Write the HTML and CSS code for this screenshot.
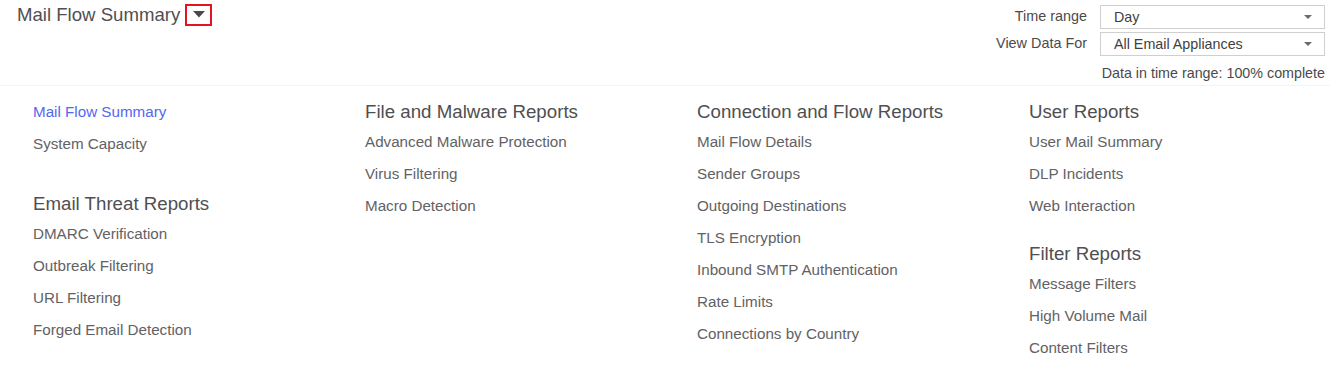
FILE: index.html
```html
<!DOCTYPE html>
<html lang="en">
<head>
<meta charset="utf-8">
<title>Mail Flow Summary</title>
<link rel="stylesheet" href="styles.css">
</head>
<body>
<header class="topbar">
  <div class="title-row">
    <h1 class="page-title">Mail Flow Summary</h1>
    <span class="title-toggle">
      <svg width="12" height="7" viewBox="0 0 12 7"><path d="M0 0 H12 L6 6.5 Z" fill="#4a4a4c"/></svg>
    </span>
  </div>
  <div class="controls">
    <div class="control-grid">
      <span class="ctl-label">Time range</span>
      <div class="select"><span>Day</span><svg class="caret" width="8" height="4" viewBox="0 0 8 4"><path d="M0 0 H8 L4 4 Z" fill="#6b6b6b"/></svg></div>
      <span class="ctl-label">View Data For</span>
      <div class="select"><span>All Email Appliances</span><svg class="caret" width="8" height="4" viewBox="0 0 8 4"><path d="M0 0 H8 L4 4 Z" fill="#6b6b6b"/></svg></div>
    </div>
    <div class="completeness">Data in time range: 100% complete</div>
  </div>
</header>
<main class="menu">
  <section class="col">
    <div class="group group-untitled">
      <a class="item active">Mail Flow Summary</a>
      <a class="item">System Capacity</a>
    </div>
    <div class="group">
      <h2 class="group-title">Email Threat Reports</h2>
      <a class="item">DMARC Verification</a>
      <a class="item">Outbreak Filtering</a>
      <a class="item">URL Filtering</a>
      <a class="item">Forged Email Detection</a>
    </div>
  </section>
  <section class="col">
    <div class="group">
      <h2 class="group-title">File and Malware Reports</h2>
      <a class="item">Advanced Malware Protection</a>
      <a class="item">Virus Filtering</a>
      <a class="item">Macro Detection</a>
    </div>
  </section>
  <section class="col">
    <div class="group">
      <h2 class="group-title">Connection and Flow Reports</h2>
      <a class="item">Mail Flow Details</a>
      <a class="item">Sender Groups</a>
      <a class="item">Outgoing Destinations</a>
      <a class="item">TLS Encryption</a>
      <a class="item">Inbound SMTP Authentication</a>
      <a class="item">Rate Limits</a>
      <a class="item">Connections by Country</a>
    </div>
  </section>
  <section class="col">
    <div class="group">
      <h2 class="group-title">User Reports</h2>
      <a class="item">User Mail Summary</a>
      <a class="item">DLP Incidents</a>
      <a class="item">Web Interaction</a>
    </div>
    <div class="group">
      <h2 class="group-title">Filter Reports</h2>
      <a class="item">Message Filters</a>
      <a class="item">High Volume Mail</a>
      <a class="item">Content Filters</a>
    </div>
  </section>
</main>
</body>
</html>
```
FILE: styles.css
```css
* { box-sizing: border-box; }
html, body { margin: 0; padding: 0; background: #fff; }
body {
  font-family: "Liberation Sans", Arial, sans-serif;
  color: #58585b;
  width: 1330px;
  height: 368px;
  overflow: hidden;
}
.topbar {
  height: 86px;
  display: flex;
  justify-content: space-between;
  align-items: flex-start;
  padding: 0 5px 0 17px;
  border-bottom: 1px solid #f4f4f4;
}
.title-row {
  display: flex;
  align-items: center;
  margin-top: 4px;
  height: 22px;
}
.page-title {
  margin: 0;
  font-size: 18.6px;
  font-weight: normal;
  line-height: 22px;
  color: #4f4f52;
}
.title-toggle {
  margin-left: 5px;
  width: 27px;
  height: 22px;
  border: 2px solid #e3141f;
  display: flex;
  align-items: center;
  justify-content: center;
}
.title-toggle svg { display: block; margin-top: -2px; }
.controls {
  padding-top: 5px;
  display: flex;
  flex-direction: column;
  align-items: flex-end;
}
.control-grid {
  display: grid;
  grid-template-columns: auto 225px;
  column-gap: 13px;
  row-gap: 3px;
  align-items: center;
}
.ctl-label {
  font-size: 14.4px;
  color: #4a4a4d;
  text-align: right;
  margin-top: -2px;
}
.select {
  height: 24px;
  border: 1px solid #cfcfcf;
  display: flex;
  align-items: center;
  justify-content: space-between;
  padding: 0 12px 0 13px;
  font-size: 14.3px;
  color: #3f3f42;
}
.caret { display: block; }
.completeness {
  margin-top: 8px;
  font-size: 14.3px;
  line-height: 18px;
  color: #4a4a4d;
}
.menu {
  display: grid;
  grid-template-columns: repeat(4, 332px);
  padding: 10px 0 0 33px;
}
.col { display: flex; flex-direction: column; }
.group + .group { margin-top: 16px; }
.group-untitled { margin-bottom: 12px; }
.group-title {
  margin: 2px 0 0;
  font-size: 18.7px;
  font-weight: normal;
  line-height: 28px;
  color: #4f4f52;
}
.item {
  display: block;
  font-size: 15.2px;
  line-height: 32px;
  color: #626265;
  cursor: pointer;
}
.item.active { color: #5468f0; }
```
